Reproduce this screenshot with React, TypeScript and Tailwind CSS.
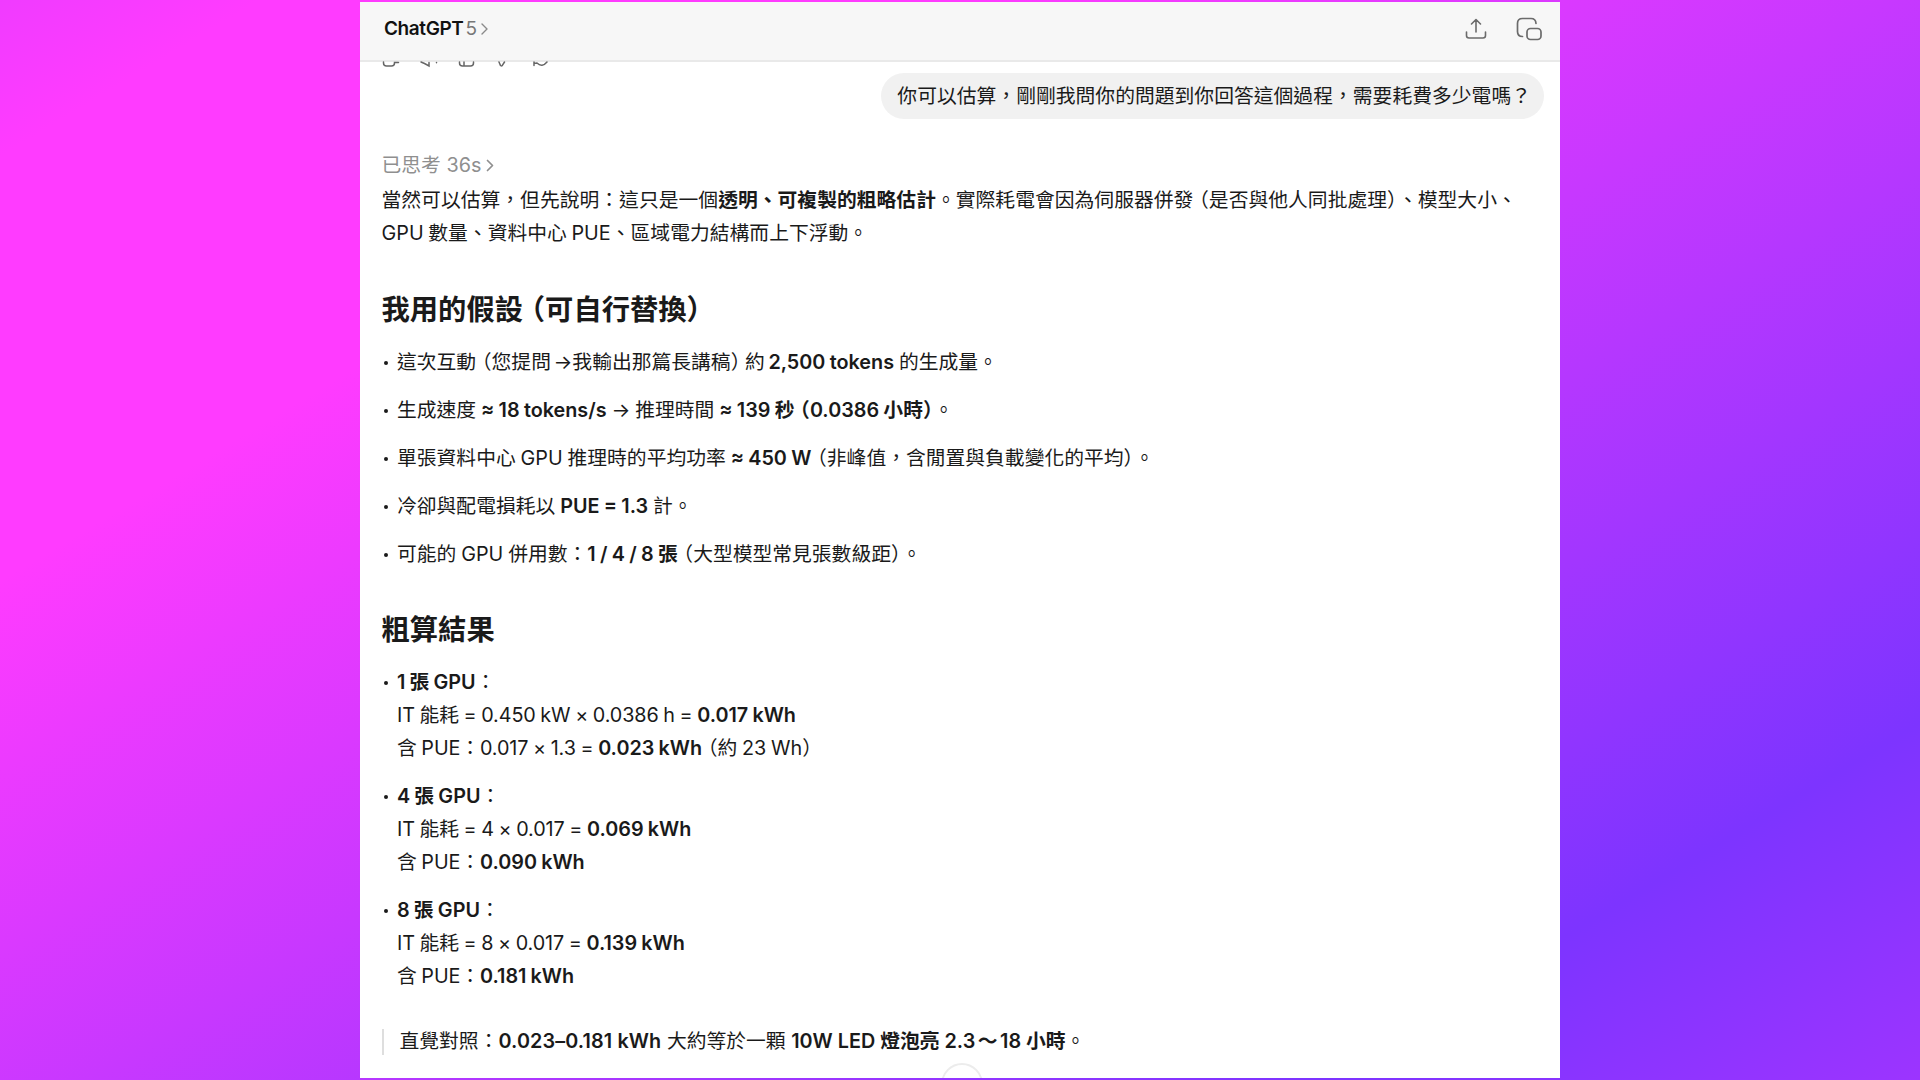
import type { ReactNode } from "react";

interface Resultado {
  titulo: string;
  it: string;
  itTotal: string;
  pue: string;
  pueTotal: string;
  nota?: ReactNode;
}

// Full-width parentheses set at half width, with a little air outside
function Par({ children }: { children: ReactNode }) {
  return (
    <>
      <span className="ml-[0.28em] [font-feature-settings:'halt']">（</span>
      {children}
      <span className="mr-[0.05em] [font-feature-settings:'halt']">）</span>
    </>
  );
}

function B({ children }: { children: ReactNode }) {
  return <strong className="font-semibold">{children}</strong>;
}

function Item({ children }: { children: ReactNode }) {
  return (
    <li className="flex">
      <span className="mt-[15px] mr-[9px] ml-[2.5px] size-[4px] shrink-0 rounded-full bg-[#1a1a1a]" />
      <div>{children}</div>
    </li>
  );
}

const resultados: Resultado[] = [
  {
    titulo: "1 張 GPU",
    it: "IT 能耗 = 0.450 kW × 0.0386 h = ",
    itTotal: "0.017 kWh",
    pue: "含 PUE：0.017 × 1.3 = ",
    pueTotal: "0.023 kWh",
    nota: <Par>約 23 Wh</Par>,
  },
  {
    titulo: "4 張 GPU",
    it: "IT 能耗 = 4 × 0.017 = ",
    itTotal: "0.069 kWh",
    pue: "含 PUE：",
    pueTotal: "0.090 kWh",
  },
  {
    titulo: "8 張 GPU",
    it: "IT 能耗 = 8 × 0.017 = ",
    itTotal: "0.139 kWh",
    pue: "含 PUE：",
    pueTotal: "0.181 kWh",
  },
];

function Header() {
  return (
    <header className="flex h-[60px] shrink-0 items-center justify-between border-b-2 border-[#e9e9e9] bg-[#f7f7f7] pr-[18px] pb-[5px] pl-[24px]">
      <div className="flex items-center text-[19px] leading-none">
        <span className="font-semibold tracking-[-0.4px] text-[#111]">ChatGPT</span>
        <span className="ml-[2px] text-[#777]">5</span>
        <svg className="ml-[4px]" width="7" height="12" viewBox="0 0 7 12" fill="none" stroke="#8a8a8a" strokeWidth="1.4" strokeLinecap="round" strokeLinejoin="round">
          <path d="M1 1l5 5-5 5" />
        </svg>
      </div>
      <div className="flex items-center gap-[29px]">
        <svg width="22" height="22" viewBox="0 0 22 22" fill="none" stroke="#6b6b6b" strokeWidth="1.6" strokeLinecap="round" strokeLinejoin="round">
          <path d="M11 14V2M6.500 6L11 1.500 15.500 6M1.500 14v3.500a2.500 2.500 0 0 0 2.500 2.500h14a2.500 2.500 0 0 0 2.500-2.500V14" />
        </svg>
        <svg width="26" height="24" viewBox="0 0 26 24" fill="none" stroke="#6b6b6b" strokeWidth="1.7" strokeLinecap="round" strokeLinejoin="round">
          <path d="M6.500 19.500c-3.500 0-5-2-5-5V6.500c0-3.500 1.500-5 5-5h8.500c3 0 4.800 1.500 5 5" />
          <rect x="11" y="11.500" width="14" height="11" rx="3.500" />
        </svg>
      </div>
    </header>
  );
}

// Tail end of the previous answer's toolbar, scrolled under the header
function Toolbar() {
  return (
    <svg className="absolute top-[59px] left-[22px]" width="180" height="7" viewBox="0 0 180 7" fill="none" stroke="#666" strokeWidth="1.5" strokeLinecap="round">
      <path d="M1.500 1v1q0 3 3 3h5q3 0 3-3v-.5h4M39 1l3.500 1.500M42.500 2.500l4.500 2.500v-3.500M54.500 1.500v0.300M77.500 1v1q0 3 3 3h8q3 0 3-3v-1M82 1v4M117 1l1.500 3.500q1.500 1 2-.5l2-3M152 1v3.500M152 2.500l3-.5M155 2q5 5 10-1" />
    </svg>
  );
}

export default function App() {
  return (
    <div className="flex h-[1080px] w-[1920px] justify-center overflow-hidden bg-[linear-gradient(149deg,#f03bff_0%,#ff3bff_7%,#ff3bff_26%,#7d34ff_84%,#9c34ff_100%)] py-[2px]">
      <main lang="zh-Hant" className="relative flex h-[1076px] w-[1200px] flex-col overflow-hidden bg-white font-[Inter,'Noto_Sans_CJK_TC',sans-serif] text-[19.8px] leading-[33px] whitespace-nowrap text-[#1a1a1a] [text-spacing-trim:space-all]">
        <Header />
        <Toolbar />

        <div className="mt-[11px] mr-[16px] h-[46px] self-end rounded-[23px] bg-[#f1f1f1] pr-[13px] pl-[16px] leading-[46px] tracking-[0.02px]">
          你可以估算，剛剛我問你的問題到你回答這個過程，需要耗費多少電嗎？
        </div>

        <div className="pl-[21.5px]">
          <div className="mt-[30px] flex items-center text-[#8f8f8f]">
            已思考 36s
            <svg className="ml-[5px]" width="8" height="13" viewBox="0 0 8 13" fill="none" stroke="#8f8f8f" strokeWidth="1.7" strokeLinecap="round" strokeLinejoin="round">
              <path d="M1.500 1.500l5 5-5 5" />
            </svg>
          </div>

          <p className="mt-[2px] tracking-[0.02px] [word-spacing:-1px]">
            當然可以估算，但先說明：這只是一個<B>透明、可複製的粗略估計</B>。實際耗電會因為伺服器併發<Par>是否與他人同批處理</Par>、模型大小、
            <br />
            GPU 數量、資料中心 PUE、區域電力結構而上下浮動。
          </p>

          <h2 className="mt-[40px] text-[28.300px] leading-[40px] font-bold">
            我用的假設<Par>可自行替換</Par>
          </h2>
          <ul className="mt-[16px] flex flex-col gap-[15px] [word-spacing:-0.7px]">
            <Item>
              這次互動<Par>您提問<span className="[word-spacing:-3px]"> →</span>我輸出那篇長講稿</Par>
              <span className="[word-spacing:-2px]"> 約 </span>
              <B>2,500 tokens</B> 的生成量。
            </Item>
            <Item>
              生成速度 <B>≈ 18 tokens/s</B> → 推理時間 <B>≈ 139 秒<Par>0.0386 小時</Par></B>。
            </Item>
            <Item>
              單張資料中心 GPU 推理時的平均功率 <B>≈ 450 W</B><Par>非峰值，含閒置與負載變化的平均</Par>。
            </Item>
            <Item>
              冷卻與配電損耗以 <B>PUE = 1.3</B> 計。
            </Item>
            <Item>
              可能的 GPU 併用數：<B>1 / 4 / 8 張</B><Par>大型模型常見張數級距</Par>。
            </Item>
          </ul>

          <h2 className="mt-[39px] text-[28.300px] leading-[40px] font-bold">粗算結果</h2>
          <ul className="mt-[16px] flex flex-col gap-[15px] [word-spacing:-0.8px]">
            {resultados.map((r) => (
              <Item key={r.titulo}>
                <B>{r.titulo}</B>：
                <br />
                <span className="tracking-[-0.1px]">{r.it}</span>
                <B>{r.itTotal}</B>
                <br />
                <span className="tracking-[-0.1px]">{r.pue}</span>
                <B>{r.pueTotal}</B>
                {r.nota}
              </Item>
            ))}
          </ul>

          <blockquote className="mt-[32px] flex h-[33px] items-center">
            <span className="mr-[16px] h-[26px] w-[2px] bg-[#dedede]" />
            <div>
              直覺對照：<strong className="font-semibold tracking-[0.12px]">0.023–0.181 kWh</strong> 大約等於一顆{" "}
              <B>
                10W LED 燈泡亮 2.3<span className="mx-[2.5px]">～</span>18 小時
              </B>
              。
            </div>
          </blockquote>
        </div>

        <div className="absolute top-[1061px] left-[581px] size-[42px] rounded-full border-2 border-[#ececec] bg-white" />
      </main>
    </div>
  );
}
